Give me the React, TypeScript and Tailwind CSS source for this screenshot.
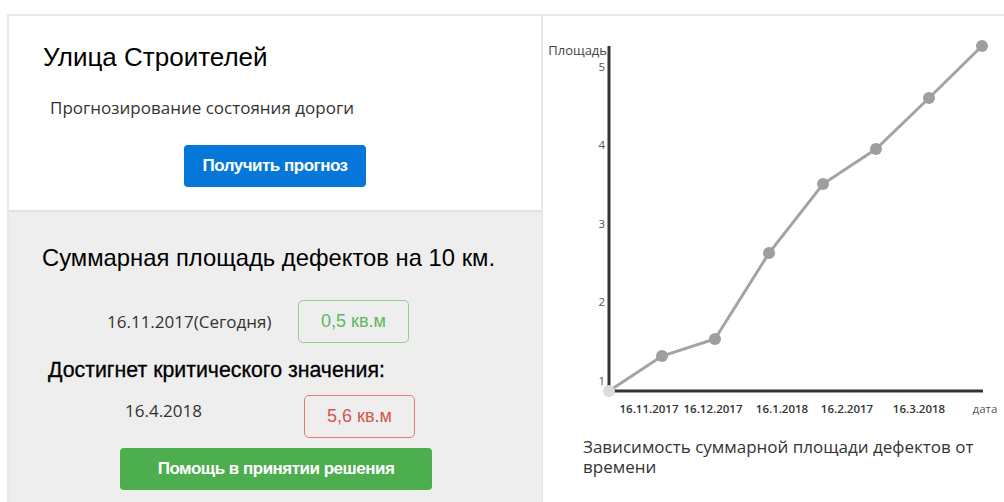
const points: [number, number][] = [
  [66, 375],
  [119, 340],
  [172, 323],
  [226, 237],
  [280, 168],
  [333, 133],
  [386, 82],
  [439, 30],
];

const yTicks = [
  { label: "5", y: 51 },
  { label: "4", y: 129 },
  { label: "3", y: 208 },
  { label: "2", y: 286 },
  { label: "1", y: 365 },
];

const xTicks = [
  { label: "16.11.2017", x: 106 },
  { label: "16.12.2017", x: 170 },
  { label: "16.1.2018", x: 239 },
  { label: "16.2.2017", x: 304 },
  { label: "16.3.2018", x: 376 },
];

function DefectChart() {
  const line = points.map(([x, y]) => `${x},${y}`).join(" ");
  return (
    <svg width="463" height="410" viewBox="0 0 463 410" className="block">
      <g fontFamily="'Open Sans', sans-serif">
        <text x="64" y="39" fontSize="13" fill="#444" textAnchor="end">
          Площадь
        </text>
        {yTicks.map((t) => (
          <text key={t.label} x="62" y={t.y + 4} fontSize="11.5" fill="#555" textAnchor="end">
            {t.label}
          </text>
        ))}
        {xTicks.map((t) => (
          <text key={t.label} x={t.x} y="397" fontSize="11.5" fontWeight="600" fill="#333" textAnchor="middle">
            {t.label}
          </text>
        ))}
        <text x="442" y="397" fontSize="11.5" fill="#555" textAnchor="middle">
          дата
        </text>
      </g>
      {/* axes */}
      <line x1="66" y1="30" x2="66" y2="376" stroke="#333" strokeWidth="3" />
      <line x1="66" y1="375" x2="440" y2="375" stroke="#333" strokeWidth="3" />
      <polyline points={line} fill="none" stroke="#a3a3a3" strokeWidth="3" />
      {points.map(([x, y], i) => (
        <circle key={i} cx={x} cy={y} r="6" fill={i === 0 ? "#dcdcdc" : "#9e9e9e"} />
      ))}
    </svg>
  );
}

export default function App() {
  return (
    <div className="w-[1004px] h-[502px] overflow-hidden bg-white pt-[14px] pl-[7px] flex">
      {/* Left column */}
      <div className="w-[536px] shrink-0 flex flex-col border-l-2 border-t-2 border-r-2 border-[#e8e8e8]">
        <div className="h-[194px] bg-white flex flex-col">
          <h1 className="mt-[26px] ml-[34px] text-[26px] leading-[30px] text-black font-['Liberation_Sans',Arial,sans-serif]">
            Улица Строителей
          </h1>
          <p className="mt-[24px] ml-[41px] text-[17px] leading-[24px] text-[#333] font-['Open_Sans',sans-serif]">
            Прогнозирование состояния дороги
          </p>
          <div className="mt-[25px] flex justify-center">
            <button className="w-[182px] h-[42px] rounded-[4px] bg-[#0477d9] text-white text-[17px] font-bold tracking-[-0.5px] font-['Liberation_Sans',Arial,sans-serif]">
              Получить прогноз
            </button>
          </div>
        </div>
        <div className="flex-1 bg-[#eeeeee] border-t-2 border-[#e2e2e2] flex flex-col">
          <h2 className="mt-[31px] ml-[33px] text-[23.8px] leading-[30px] text-black font-['Liberation_Sans',Arial,sans-serif]">
            Суммарная площадь дефектов на 10 км.
          </h2>
          <div className="mt-[27px] flex items-center">
            <span className="ml-[98px] w-[191px] text-[17px] text-[#333] font-['Open_Sans',sans-serif]">
              16.11.2017(Сегодня)
            </span>
            <div className="w-[111px] h-[43px] rounded-[5px] border border-[#8fd08f] flex items-center justify-center text-[18px] text-[#5cb85c] font-['Liberation_Sans',Arial,sans-serif]">
              0,5 кв.м
            </div>
          </div>
          <h3 className="mt-[14px] ml-[39px] text-[21.3px] leading-[26px] text-black font-['Liberation_Sans',Arial,sans-serif] [-webkit-text-stroke:0.3px_black]">
            Достигнет критического значения:
          </h3>
          <div className="mt-[12px] flex items-start">
            <span className="ml-[116px] w-[179px] mt-[4px] text-[17px] leading-[23px] text-[#333] font-['Open_Sans',sans-serif]">
              16.4.2018
            </span>
            <div className="w-[111px] h-[43px] rounded-[5px] border border-[#e27c7c] flex items-center justify-center text-[18px] text-[#d9534f] font-['Liberation_Sans',Arial,sans-serif]">
              5,6 кв.м
            </div>
          </div>
          <div className="mt-[10px] flex">
            <button className="ml-[111px] w-[312px] h-[42px] rounded-[4px] bg-[#4cae4f] text-white text-[17px] font-bold tracking-[-0.5px] font-['Liberation_Sans',Arial,sans-serif]">
              Помощь в принятии решения
            </button>
          </div>
        </div>
      </div>

      {/* Right column: chart */}
      <div className="flex-1 border-t-2 border-[#e8e8e8] flex flex-col">
        <DefectChart />
        <p className="mt-[11px] ml-[40px] w-[410px] text-[17px] leading-[20px] text-[#333] font-['Open_Sans',sans-serif]">
          Зависимость суммарной площади дефектов от времени
        </p>
      </div>
    </div>
  );
}
